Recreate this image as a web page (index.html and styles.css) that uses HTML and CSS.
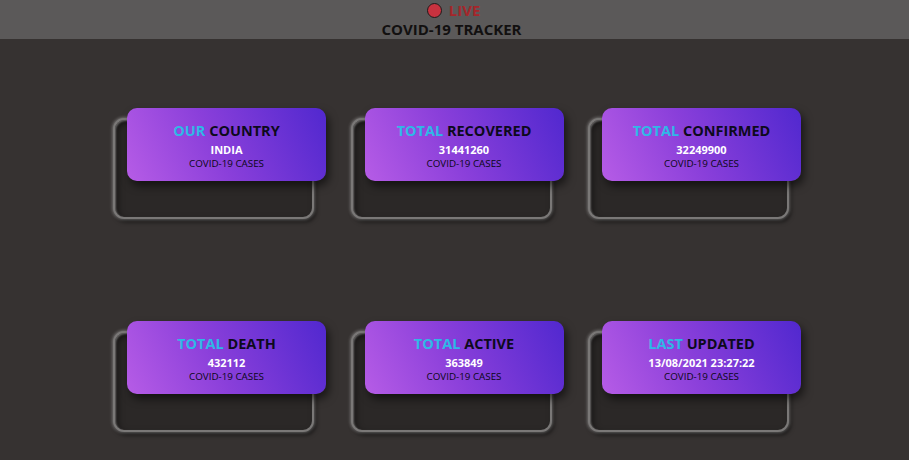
FILE: index.html
```html
<!DOCTYPE html>
<html>
<head>
<meta charset="utf-8">
<link rel="stylesheet" href="styles.css">
</head>
<body>
<header class="top">
  <div class="live"><span class="dot"></span><span class="live-text">LIVE</span></div>
  <h1 class="title">COVID-19 TRACKER</h1>
</header>
<main class="board">
  <div class="tile">
    <div class="back"></div>
    <div class="card">
      <div class="head"><span class="accent">OUR</span> COUNTRY</div>
      <div class="value">INDIA</div>
      <div class="sub">COVID-19 CASES</div>
    </div>
  </div>
  <div class="tile">
    <div class="back"></div>
    <div class="card">
      <div class="head"><span class="accent">TOTAL</span> RECOVERED</div>
      <div class="value">31441260</div>
      <div class="sub">COVID-19 CASES</div>
    </div>
  </div>
  <div class="tile">
    <div class="back"></div>
    <div class="card">
      <div class="head"><span class="accent">TOTAL</span> CONFIRMED</div>
      <div class="value">32249900</div>
      <div class="sub">COVID-19 CASES</div>
    </div>
  </div>
  <div class="tile">
    <div class="back"></div>
    <div class="card">
      <div class="head"><span class="accent">TOTAL</span> DEATH</div>
      <div class="value">432112</div>
      <div class="sub">COVID-19 CASES</div>
    </div>
  </div>
  <div class="tile">
    <div class="back"></div>
    <div class="card">
      <div class="head"><span class="accent">TOTAL</span> ACTIVE</div>
      <div class="value">363849</div>
      <div class="sub">COVID-19 CASES</div>
    </div>
  </div>
  <div class="tile">
    <div class="back"></div>
    <div class="card">
      <div class="head"><span class="accent">LAST</span> UPDATED</div>
      <div class="value">13/08/2021 23:27:22</div>
      <div class="sub">COVID-19 CASES</div>
    </div>
  </div>
</main>
</body>
</html>
```
FILE: styles.css
```css
* { box-sizing: border-box; }
html, body { margin: 0; padding: 0; }
body {
  background: #363231;
  font-family: "Open Sans", "Noto Sans", sans-serif;
  width: 909px;
  height: 460px;
  overflow: hidden;
}
.top {
  height: 39px;
  background: #5b5959;
  display: flex;
  flex-direction: column;
  align-items: center;
  padding-top: 1px;
}
.live {
  display: flex;
  align-items: center;
  gap: 7px;
  height: 18px;
  margin-right: 2px;
}
.dot {
  width: 15px;
  height: 15px;
  border-radius: 50%;
  background: #c8323f;
  border: 1px solid #1f1a1a;
}
.live-text {
  color: #a5262b;
  font-weight: 700;
  font-size: 15px;
  line-height: 18px;
}
.title {
  margin: 1px 6px 0 0;
  font-size: 15px;
  line-height: 19px;
  font-weight: 700;
  color: #121010;
}
.board {
  display: grid;
  grid-template-columns: repeat(3, 213px);
  column-gap: 24.5px;
  row-gap: 102px;
  padding: 69px 0 0 113px;
}
.tile {
  display: grid;
  width: 213px;
  height: 111px;
}
.back {
  grid-area: 1 / 1;
  margin: 10px 12px 0 0;
  border-radius: 11px;
  background: #2b2827;
  border: 2px solid #7a7877;
  box-shadow: 0 0 3px 1px rgba(255,255,255,0.3), 2px 3px 4px rgba(0,0,0,0.6), inset 1px 1px 2px rgba(255,255,255,0.35), inset 3px 3px 6px rgba(0,0,0,0.5);
}
.card {
  grid-area: 1 / 1;
  margin: 0 0 38px 14px;
  z-index: 1;
  border-radius: 10px;
  background: linear-gradient(65deg, #b65ce6 0%, #8a3fda 45%, #5128cf 100%);
  box-shadow: 3px 5px 8px rgba(0,0,0,0.55);
  display: flex;
  flex-direction: column;
  align-items: center;
  padding-top: 13px;
}
.head {
  font-size: 14.5px;
  font-weight: 700;
  color: #0d0a1c;
  line-height: 19px;
}
.accent { color: #2fb8e6; }
.value {
  font-size: 11px;
  font-weight: 700;
  color: #ffffff;
  line-height: 15px;
  margin-top: 2px;
}
.sub {
  font-size: 9.8px;
  color: #0a0714;
  line-height: 14px;
  margin-top: 0;
}
```
